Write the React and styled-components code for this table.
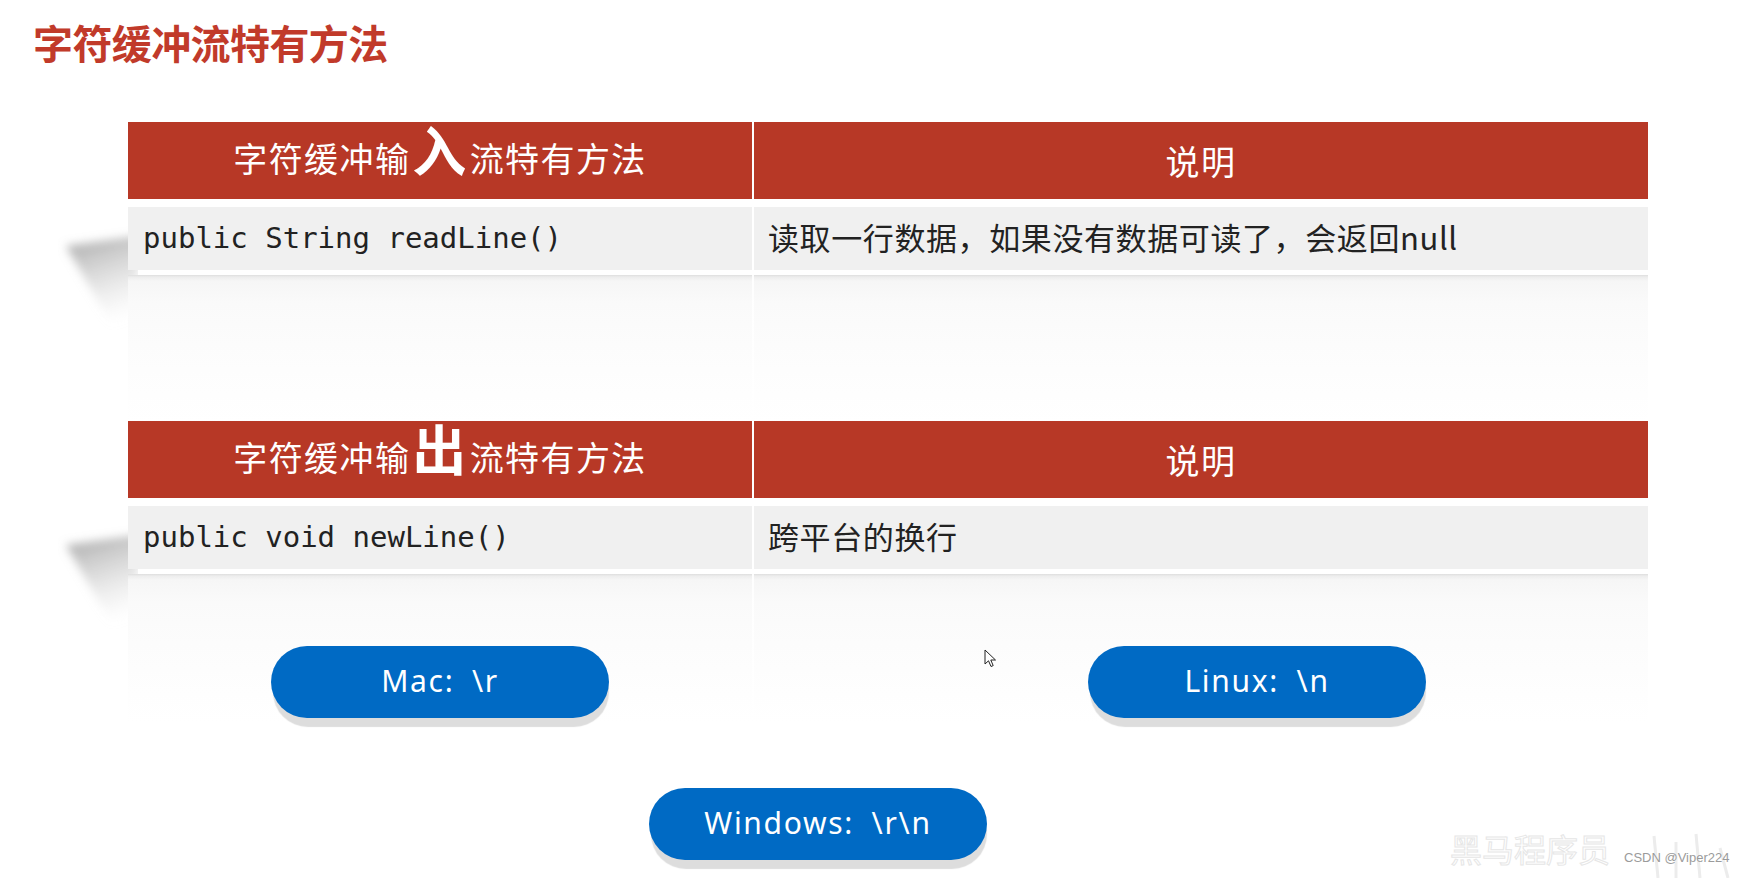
import React from "react";
import styled, { createGlobalStyle } from "styled-components";

const GlobalStyle = createGlobalStyle`
  html, body { margin: 0; padding: 0; }
  html { background: #fff; }
  body { font-family: "Noto Sans", "Noto Sans CJK SC", sans-serif; }
`;

const Page = styled.div`
  position: relative;
  z-index: 0;
  width: 1744px;
  height: 878px;
  overflow: hidden;
  background: #fff;
`;

const Title = styled.h1`
  margin: 0;
  padding: 14px 0 0 33px;
  font-family: "Noto Sans CJK SC", sans-serif;
  font-size: 40px;
  font-weight: 700;
  line-height: 56px;
  letter-spacing: -0.6px;
  color: #c13a2a;
`;

const TableBlock = styled.section`
  position: relative;
  width: 1520px;
  margin: ${(p) => p.$top}px 0 0 128px;

  &::after {
    content: "";
    position: absolute;
    z-index: -1;
    left: 0;
    right: 0;
    top: calc(100% + 5px);
    height: 150px;
    background:
      linear-gradient(to right, transparent 624px, rgba(255,255,255,0.9) 624px, rgba(255,255,255,0.9) 626px, transparent 626px),
      linear-gradient(to bottom, #dedede 0px, #ededed 2px, #f6f6f6 6px, #fafafa 28px, #fcfcfc 70px, #fefefe 120px, #fff 150px);
  }
`;

const CurlShadow = styled.svg`
  position: absolute;
  z-index: -1;
  left: -70px;
  top: 100px;
  width: 80px;
  height: 120px;
`;

const Columns = styled.div`
  display: grid;
  grid-template-columns: 624px 894px;
  column-gap: 2px;
`;

const HeaderRow = styled(Columns)`
  height: 77px;
`;

const HeaderCell = styled.div`
  background: #b73826;
  color: #fff;
  display: flex;
  justify-content: center;
  align-items: flex-start;
  padding-top: ${(p) => p.$pad}px;
  box-sizing: border-box;
  font-family: "Noto Sans CJK SC", sans-serif;
  font-size: 34px;
  line-height: 1;
  letter-spacing: 1.4px;
`;

const HeaderTitle = styled.span`
  display: inline-flex;
  align-items: baseline;
  white-space: nowrap;
`;

const BigChar = styled.span`
  font-size: 54px;
  font-weight: 700;
  margin: 0 2px;
`;

const BodyRow = styled(Columns)`
  margin-top: 8px;
  height: 63px;
`;

const BodyCell = styled.div`
  background: #f0f0f0;
  color: #222;
  display: flex;
  align-items: center;
  box-sizing: border-box;
  padding-left: ${(p) => p.$indent}px;
  padding-bottom: ${(p) => p.$lift || 0}px;
  white-space: nowrap;
`;

const Code = styled.span`
  font-family: "DejaVu Sans Mono", "Liberation Mono", monospace;
  font-size: 29px;
`;

const Desc = styled.span`
  font-family: "Noto Sans CJK SC", sans-serif;
  font-size: 31px;
  letter-spacing: 0.6px;
`;

const ButtonRow = styled.div`
  display: flex;
  gap: ${(p) => p.$gap || 0}px;
  margin-top: ${(p) => p.$top}px;
  padding-left: ${(p) => p.$left}px;
`;

const Pill = styled.div`
  width: 338px;
  height: 72px;
  box-sizing: border-box;
  padding-bottom: 4px;
  border-radius: 36px;
  background: #006ac4;
  color: #fff;
  display: flex;
  align-items: center;
  justify-content: center;
  font-family: "Noto Sans", sans-serif;
  font-size: 30px;
  letter-spacing: 1.7px;
  word-spacing: 8px;
  box-shadow: 1px 10px 1px -1px #dddddd;
  white-space: pre;
`;

const Cursor = styled.svg`
  position: absolute;
  left: 984px;
  top: 649px;
  width: 14px;
  height: 19px;
`;

const Watermark = styled.div`
  position: absolute;
  right: 0;
  bottom: 0;
  width: 300px;
  height: 64px;
`;

const GhostLogo = styled.span`
  position: absolute;
  left: 6px;
  top: 18px;
  font-family: "Noto Sans CJK SC", sans-serif;
  font-size: 32px;
  line-height: 1;
  color: #fff;
  -webkit-text-stroke: 1px #e6e6e6;
`;

const Credit = styled.span`
  position: absolute;
  left: 180px;
  top: 36px;
  font-family: "Liberation Sans", Arial, sans-serif;
  font-size: 13px;
  color: #9b9b9b;
  text-shadow: 0 0 2px #fff;
`;

const BiliMark = styled.svg`
  position: absolute;
  left: 204px;
  top: 14px;
  width: 90px;
  height: 50px;
`;

function Shadow() {
  return (
    <CurlShadow viewBox="0 0 80 120">
      <defs>
        <linearGradient id="cg" x1="0" y1="0" x2="0.25" y2="1">
          <stop offset="0" stopColor="#8c8c8c" stopOpacity="0.8" />
          <stop offset="0.5" stopColor="#b8b8b8" stopOpacity="0.45" />
          <stop offset="1" stopColor="#e0e0e0" stopOpacity="0" />
        </linearGradient>
        <filter id="cb" x="-40%" y="-40%" width="180%" height="180%">
          <feGaussianBlur stdDeviation="5" />
        </filter>
      </defs>
      <polygon points="8,24 80,14 80,114 60,114" fill="url(#cg)" filter="url(#cb)" />
    </CurlShadow>
  );
}

function MethodTable({ top, prefix, big, suffix, code, desc }) {
  return (
    <TableBlock $top={top}>
      <Shadow />
      <HeaderRow>
        <HeaderCell $pad={0}>
          <HeaderTitle>
            {prefix}
            <BigChar>{big}</BigChar>
            {suffix}
          </HeaderTitle>
        </HeaderCell>
        <HeaderCell $pad={22}>说明</HeaderCell>
      </HeaderRow>
      <BodyRow>
        <BodyCell $indent={15} $lift={1}>
          <Code>{code}</Code>
        </BodyCell>
        <BodyCell $indent={14} $lift={5}>
          <Desc>{desc}</Desc>
        </BodyCell>
      </BodyRow>
    </TableBlock>
  );
}

export default function App() {
  return (
    <Page>
      <GlobalStyle />
      <Title>字符缓冲流特有方法</Title>
      <MethodTable
        top={52}
        prefix="字符缓冲输"
        big="入"
        suffix="流特有方法"
        code="public String readLine()"
        desc="读取一行数据，如果没有数据可读了，会返回null"
      />
      <MethodTable
        top={151}
        prefix="字符缓冲输"
        big="出"
        suffix="流特有方法"
        code="public void newLine()"
        desc="跨平台的换行"
      />
      <ButtonRow $top={77} $left={271} $gap={479}>
        <Pill>Mac: \r</Pill>
        <Pill>Linux: \n</Pill>
      </ButtonRow>
      <ButtonRow $top={70} $left={649}>
        <Pill>Windows: \r\n</Pill>
      </ButtonRow>
      <Cursor viewBox="0 0 14 19">
        <path d="M1 1 L1 15 L4.5 11.8 L7 17.5 L9.2 16.6 L6.8 11 L11.5 11 Z" fill="#fff" stroke="#222" strokeWidth="1" strokeLinejoin="round" />
      </Cursor>
      <Watermark>
        <BiliMark viewBox="0 0 90 50">
          <g fill="none" stroke="#ececec" strokeWidth="3">
            <path d="M6 8 L10 50" />
            <path d="M28 14 L28 50" />
            <path d="M48 6 L52 50" />
            <path d="M72 20 L80 50" />
          </g>
        </BiliMark>
        <GhostLogo>黑马程序员</GhostLogo>
        <Credit>CSDN @Viper224</Credit>
      </Watermark>
    </Page>
  );
}
